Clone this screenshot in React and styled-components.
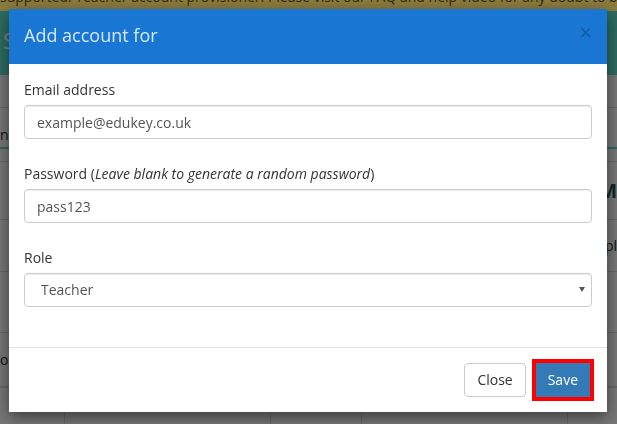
import styled, { createGlobalStyle } from "styled-components";

const GlobalStyle = createGlobalStyle`
  html, body {
    margin: 0;
    padding: 0;
    height: 100%;
    overflow: hidden;
  }
  body {
    font-family: "Open Sans", "Liberation Sans", sans-serif;
    font-size: 14px;
    line-height: 20px;
    color: #333;
    background: #d8d8d8;
  }
  * {
    box-sizing: border-box;
  }
`;

const rows = [
  { h: 33 },
  { h: 41, left: "n", accent: true },
  { h: 13 },
  { h: 58, right: "FORM", heading: true },
  { h: 52, right: "Templ" },
  { h: 61 },
  { h: 54, left: "on" },
];

const cells = [65, 206, 91, 206, 49];

export default function App() {
  return (
    <>
      <GlobalStyle />
      <Page>
        <Banner>
          <span>
            supported. Teacher account provisioner. Please visit our FAQ and help
            video for any doubt to be resolved.
          </span>
        </Banner>
        <PageHeader>S</PageHeader>
        {rows.map((row, i) => (
          <Row key={i} $h={row.h} $accent={row.accent}>
            <RowText>{row.left}</RowText>
            <RowText $heading={row.heading}>{row.right}</RowText>
          </Row>
        ))}
        <TableRow>
          {cells.map((w, i) => (
            <Cell key={i} $w={w}>
              {i === 0 ? "or" : ""}
            </Cell>
          ))}
        </TableRow>
      </Page>

      <Backdrop />

      <Modal>
        <Header>
          <Title>Add account for</Title>
          <CloseX>×</CloseX>
        </Header>

        <Body>
          <FormGroup>
            <Label>Email address</Label>
            <Input type="email" defaultValue="example@edukey.co.uk" />
          </FormGroup>

          <FormGroup>
            <Label>
              Password (<em>Leave blank to generate a random password</em>)
            </Label>
            <Input type="text" defaultValue="pass123" />
          </FormGroup>

          <FormGroup>
            <Label>Role</Label>
            <SelectWrap>
              <Select defaultValue="teacher">
                <option value="teacher">Teacher</option>
                <option value="admin">Admin</option>
              </Select>
              <Arrow width="6" height="5" viewBox="0 0 6 5">
                <path d="M0 0 H6 L3 5 Z" fill="#555" />
              </Arrow>
            </SelectWrap>
          </FormGroup>
        </Body>

        <Footer>
          <Button>Close</Button>
          <Button $primary>Save</Button>
        </Footer>
      </Modal>
    </>
  );
}

// Page behind the dialog
const Page = styled.div`
  display: flex;
  flex-direction: column;
  height: 100vh;
  overflow: hidden;
`;

const Banner = styled.div`
  height: 11px;
  flex: none;
  display: flex;
  align-items: flex-end;
  padding: 0 0 7px 0;
  overflow: hidden;
  background: #fcdf70;
  color: #5a4a18;
  font-size: 14px;
  line-height: 14px;
  white-space: nowrap;
`;

const PageHeader = styled.div`
  height: 64px;
  flex: none;
  display: flex;
  align-items: center;
  padding: 0 0 6px 3px;
  background: #52c2b0;
  color: #e6ecec;
  font-size: 22px;
`;

const Row = styled.div`
  height: ${(p) => p.$h}px;
  flex: none;
  display: flex;
  justify-content: space-between;
  align-items: center;
  border-bottom: ${(p) => (p.$accent ? "2px solid #52c2b0" : "1px solid #bdbdbd")};
  padding-top: ${(p) => (p.$accent ? "14px" : "0")};
`;

const RowText = styled.span`
  font-size: ${(p) => (p.$heading ? "20px" : "14px")};
  font-weight: ${(p) => (p.$heading ? 700 : 400)};
  color: ${(p) => (p.$heading ? "#1e4a4a" : "#222")};
  white-space: nowrap;
`;

const TableRow = styled.div`
  display: flex;
  flex: 1;
  border-top: 1px solid #bdbdbd;
`;

const Cell = styled.div`
  width: ${(p) => p.$w}px;
  flex: none;
  padding-top: 8px;
  border-right: 1px solid #bdbdbd;
  color: #222;
  text-align: right;
  &:last-child {
    flex: 1;
    border-right: none;
  }
`;

const Backdrop = styled.div`
  position: fixed;
  inset: 0;
  background: rgba(0, 0, 0, 0.45);
`;

// Dialog
const Modal = styled.div`
  position: fixed;
  top: 9px;
  left: 9px;
  width: 598px;
  background: #fff;
  box-shadow: 0 5px 15px rgba(0, 0, 0, 0.5);
  font-family: "Open Sans", "Liberation Sans", sans-serif;
`;

const Header = styled.div`
  display: flex;
  justify-content: space-between;
  align-items: flex-start;
  height: 55px;
  padding: 14px 15px 16px 15px;
  background: #1976d2;
`;

const Title = styled.h4`
  margin: 0;
  font-size: 18px;
  font-weight: 400;
  line-height: 25px;
  color: #d4e8fb;
`;

const CloseX = styled.span`
  margin-top: -1px;
  font-family: "Liberation Sans", Arial, sans-serif;
  font-size: 22px;
  font-weight: 400;
  line-height: 1;
  color: #000;
  opacity: 0.22;
  cursor: pointer;
`;

const Body = styled.div`
  padding: 16px 15px 15px 15px;
`;

const FormGroup = styled.div`
  margin-bottom: 25px;
`;

const Label = styled.label`
  display: block;
  margin-bottom: 5px;
  font-size: 14px;
  line-height: 20px;
  font-weight: 400;
  color: #333;

  em {
    font-style: italic;
  }
`;

const Input = styled.input`
  display: block;
  width: 100%;
  height: 34px;
  padding: 6px 12px;
  font-family: inherit;
  font-size: 14px;
  line-height: 20px;
  color: #555;
  background: #fff;
  border: 1px solid #ccc;
  border-radius: 4px;
  box-shadow: inset 0 1px 1px rgba(0, 0, 0, 0.075);
  outline: none;
`;

const SelectWrap = styled.div`
  position: relative;
`;

const Select = styled.select`
  display: block;
  width: 100%;
  height: 34px;
  padding: 6px 24px 6px 16px;
  font-family: inherit;
  font-size: 14px;
  line-height: 20px;
  color: #555;
  background: #fff;
  border: 1px solid #ccc;
  border-radius: 4px;
  box-shadow: inset 0 1px 1px rgba(0, 0, 0, 0.075);
  appearance: none;
  outline: none;
`;

const Arrow = styled.svg`
  position: absolute;
  right: 7px;
  top: 14px;
  pointer-events: none;
`;

const Footer = styled.div`
  display: flex;
  justify-content: flex-end;
  align-items: center;
  gap: 10px;
  padding: 15px 17px 15px 15px;
  border-top: 1px solid #e5e5e5;
`;

const Button = styled.button`
  height: 34px;
  padding: ${(p) => (p.$primary ? "6px 11px" : "6px 12px")};
  font-family: inherit;
  font-size: 14px;
  line-height: 20px;
  border-radius: ${(p) => (p.$primary ? "0" : "4px")};
  border: 1px solid ${(p) => (p.$primary ? "#337ab7" : "#ccc")};
  background: ${(p) => (p.$primary ? "#337ab7" : "#fff")};
  color: ${(p) => (p.$primary ? "#fff" : "#333")};
  outline: ${(p) => (p.$primary ? "4px solid #f00" : "none")};
  cursor: pointer;
`;
